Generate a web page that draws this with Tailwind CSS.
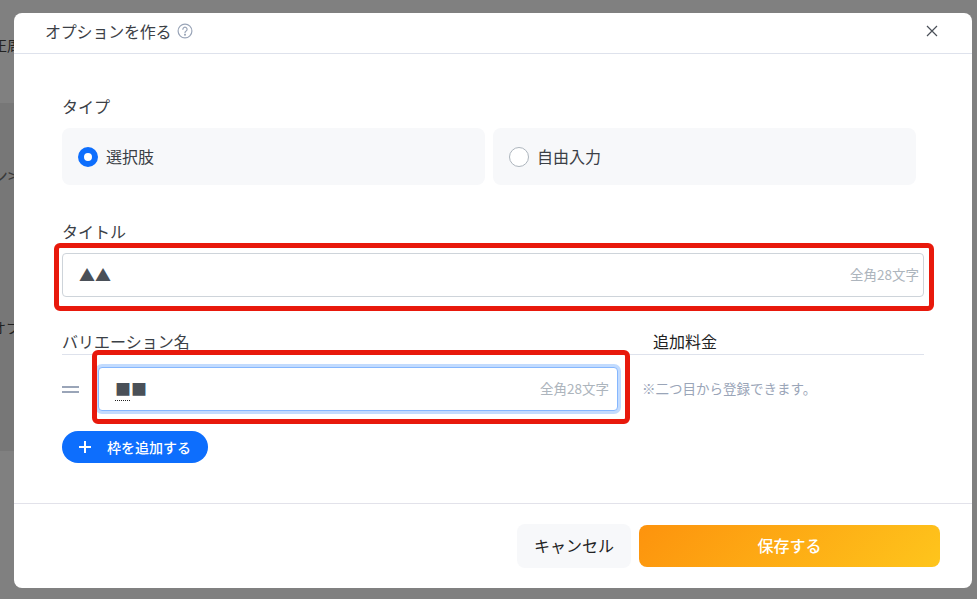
<!DOCTYPE html>
<html lang="ja">
<head>
    <meta charset="UTF-8">
    <title>オプションを作る</title>
    <script src="https://cdn.jsdelivr.net/npm/@tailwindcss/browser@4"></script>
</head>
<body class="relative w-[977px] h-[599px] overflow-hidden bg-[#808080] text-[#343a40] font-['Noto_Sans_CJK_JP','Noto_Sans',sans-serif]">
    <!-- page behind the overlay -->
    <div class="absolute left-0 top-[103px] w-[14px] h-[348px] bg-[#777777]"></div>
    <div class="absolute left-[-7px] top-[35px] whitespace-nowrap text-[14px] leading-[20px] text-[#222222]">正周</div>
    <div class="absolute left-[-10px] top-[165px] whitespace-nowrap text-[18px] leading-[20px] text-[#3a3a3a]">ン&gt;</div>
    <div class="absolute left-[-8px] top-[317px] whitespace-nowrap text-[14px] leading-[20px] text-[#222222]">オプ</div>

    <!-- modal -->
    <div class="absolute left-[14px] top-[13px] w-[958px] h-[575px] flex flex-col bg-white rounded-[8px]">
        <div class="h-[41px] shrink-0 flex items-center pl-[32px] pr-[34px] pb-[4px] border-b border-[#dee2ec]">
            <span class="ml-[-1px] text-[16px] tracking-[-0.2px] text-[#3b4046]">オプションを作る</span>
            <svg class="ml-[6px]" width="16" height="16" viewBox="0 0 16 16" fill="none" stroke="#9aa5b8" stroke-width="1.2">
                <circle cx="8" cy="8" r="6.9"/>
                <path d="M5.9 6.3a2.1 2.1 0 1 1 3.2 1.8c-.7.4-1.1.8-1.1 1.6" stroke-linecap="round"/>
                <circle cx="8" cy="11.7" r=".45" fill="#9aa5b8"/>
            </svg>
            <svg class="ml-auto" width="12" height="12" viewBox="0 0 12 12" fill="none" stroke="#4a5058" stroke-width="1.2"><path d="M1 1l10 10M11 1L1 11"/></svg>
        </div>

        <div class="flex-1 pl-[48px] pr-[48px] pt-[41px]">
            <p class="text-[16px] leading-[22px] text-[#3b4046]">タイプ</p>
            <div class="mt-[11px] flex gap-[8px] w-[854px]">
                <div class="w-[423px] h-[57px] flex items-center pl-[16px] rounded-[8px] bg-[#f7f8fa]">
                    <span class="w-[20px] h-[20px] rounded-full border-[6px] border-[#0d6efd] bg-white"></span>
                    <span class="ml-[8px] mt-[-2px] text-[16px] text-[#3b4046]">選択肢</span>
                </div>
                <div class="w-[423px] h-[57px] flex items-center pl-[16px] rounded-[8px] bg-[#f7f8fa]">
                    <span class="w-[20px] h-[20px] rounded-full border border-[#adb5bd] bg-white"></span>
                    <span class="ml-[8px] mt-[-2px] text-[16px] text-[#3b4046]">自由入力</span>
                </div>
            </div>

            <p class="mt-[35px] text-[16px] leading-[22px] text-[#3b4046]">タイトル</p>
            <div class="mt-[11px] w-[862px] h-[44px] flex items-center justify-between pl-[16px] pr-[4px] pb-[2px] rounded-[4px] border border-[#ced4da] bg-white">
                <span class="text-[16px] text-[#4a5058]">▲▲</span>
                <span class="text-[13.5px] text-[#adb5bd]">全角28文字</span>
            </div>

            <div class="mt-[33px] flex w-[862px] h-[25px] border-b border-[#dee2ec]">
                <span class="w-[591px] text-[16px] leading-[22px] text-[#3b4046]">バリエーション名</span>
                <span class="text-[16px] leading-[22px] text-[#222222]">追加料金</span>
            </div>

            <div class="mt-[12px] flex items-center">
                <span class="w-[17px] h-[7px] border-y-2 border-[#9aa5b8]"></span>
                <div class="ml-[19px] w-[520px] h-[44px] flex items-center justify-between pl-[16px] pr-[8px] pb-[2px] rounded-[4px] border border-[#86b7fe] bg-white shadow-[0_0_0_3px_#c2dbfe]">
                    <span class="text-[16px] text-[#4a5058]"><span class="underline decoration-dotted decoration-1 underline-offset-[5px] decoration-[#222222]">■</span>■</span>
                    <span class="text-[13.5px] text-[#adb5bd]">全角28文字</span>
                </div>
                <span class="ml-[24px] mt-[-2px] text-[13.5px] text-[#9aa5b8]">※二つ目から登録できます。</span>
            </div>

            <button class="mt-[20px] w-[146px] h-[32px] flex items-center rounded-full bg-[#0d6efd] pl-[17px] text-white">
                <svg width="12" height="12" viewBox="0 0 12 12" fill="none" stroke="white" stroke-width="2"><path d="M6 0v12M0 6h12"/></svg>
                <span class="ml-[16px] text-[14px] font-medium">枠を追加する</span>
            </button>
        </div>

        <div class="h-[85px] shrink-0 flex items-center justify-end gap-[8px] pr-[32px] border-t border-[#e2e2ea]">
            <button class="w-[114px] h-[44px] pb-[2px] rounded-[8px] bg-[#f7f8fa] text-[16px] text-[#222222]">キャンセル</button>
            <button class="w-[301px] h-[42px] pb-[2px] rounded-[8px] bg-[linear-gradient(135deg,#fd930d,#fec51c)] text-[16px] font-medium text-white">保存する</button>
        </div>
    </div>

    <!-- red annotation boxes drawn on the screenshot -->
    <div class="absolute left-[54px] top-[243px] w-[880px] h-[68px] rounded-[6px] border-[5px] border-[#e8190c]"></div>
    <div class="absolute left-[92px] top-[350px] w-[538px] h-[74px] rounded-[6px] border-[5px] border-[#e8190c]"></div>
</body>
</html>
